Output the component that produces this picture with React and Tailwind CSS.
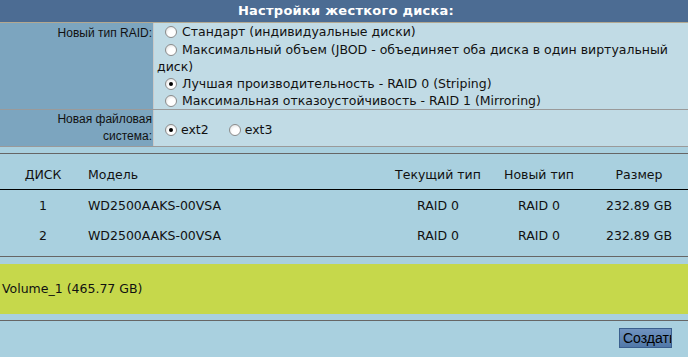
import React from "react";

// Windows XP style radio bullet
function Radio({ checked }) {
  return (
    <span className="inline-block align-[-2px] w-[12px] h-[12px] rounded-full border border-[#8c8c8c] bg-[radial-gradient(circle_at_60%_65%,#ffffff_40%,#d8d8d8_100%)] relative">
      {checked && (
        <span className="absolute left-[3px] top-[3px] w-[4px] h-[4px] rounded-full bg-black" />
      )}
    </span>
  );
}

const disks = [
  { id: 1, model: "WD2500AAKS-00VSA", cur: "RAID 0", next: "RAID 0", size: "232.89 GB" },
  { id: 2, model: "WD2500AAKS-00VSA", cur: "RAID 0", next: "RAID 0", size: "232.89 GB" },
];

export default function App() {
  const label = "font-['Liberation_Sans',Arial,sans-serif] text-[12px] text-[#111] text-right pr-[1px]";
  const value = "font-['DejaVu_Sans',Verdana,sans-serif] text-[12.5px] text-[#111]";

  return (
    <div className="w-[688px] h-[357px] overflow-hidden bg-[#a9d0df] font-['DejaVu_Sans',Verdana,sans-serif]">
      {/* header */}
      <div className="h-[23px] bg-[#4c6c93] border-b border-[#b3a890] flex items-center justify-center">
        <span className="text-white font-bold text-[13px] tracking-[0.25px] pl-[4px]">
          Настройки жесткого диска:
        </span>
      </div>

      {/* RAID type */}
      <div className="flex border-b border-[#9a9a9a]">
        <div className={`w-[153px] bg-[#7ca5bf] leading-[17px] pt-[2px] ${label}`}>Новый тип RAID:</div>
        <div className={`flex-1 bg-[#c1dbe5] border-l border-[#c9c9c9] pl-[3px] leading-[17px] ${value}`}>
          <div className="pl-[8px]"><Radio /> <span className="pl-[1px]">Стандарт (индивидуальные диски)</span></div>
          <div className="mt-[1px]">
            <span className="pl-[8px]"><Radio /></span> <span className="pl-[1px]">Максимальный объем (JBOD - объединяет оба диска в один виртуальный</span>
            <br />
            диск)
          </div>
          <div className="pl-[8px]"><Radio checked /> <span className="pl-[1px]">Лучшая производительность - RAID 0 (Striping)</span></div>
          <div className="pl-[8px]"><Radio /> <span className="pl-[1px]">Максимальная отказоустойчивость - RAID 1 (Mirroring)</span></div>
        </div>
      </div>

      {/* file system */}
      <div className="flex h-[37px] border-b border-[#9a9a9a]">
        <div className={`w-[153px] bg-[#7ca5bf] leading-[17px] pt-[1px] ${label}`}>
          Новая файловая
          <br />
          система:
        </div>
        <div className={`flex-1 bg-[#c1dbe5] border-l border-[#c9c9c9] pl-[11px] flex items-center pt-[4px] ${value}`}>
          <Radio checked />
          <span className="ml-[4px]">ext2</span>
          <span className="ml-[20px]"><Radio /></span>
          <span className="ml-[4px]">ext3</span>
        </div>
      </div>

      {/* disks table */}
      <div className="mt-[6px] border-t border-[#666] text-[12.5px] text-[#111]">
        <div className="grid grid-cols-[86px_302px_100px_102px_98px] h-[36px] items-end pb-[4px] border-b border-black">
          <div className="text-center">ДИСК</div>
          <div className="pl-[2px]">Модель</div>
          <div className="text-center">Текущий тип</div>
          <div className="text-center">Новый тип</div>
          <div className="text-center">Размер</div>
        </div>
        <div className="pt-[1px] pb-[5px] border-b border-[#666]">
          {disks.map((d) => (
            <div key={d.id} className="grid grid-cols-[86px_302px_100px_102px_98px] h-[30px] items-center">
              <div className="text-center">{d.id}</div>
              <div className="pl-[2px]">{d.model}</div>
              <div className="text-center">{d.cur}</div>
              <div className="text-center">{d.next}</div>
              <div className="text-center">{d.size}</div>
            </div>
          ))}
        </div>
      </div>

      {/* volume */}
      <div className="mt-[7px] h-[50px] bg-[#c6d84b] flex items-center pl-[2px] text-[12.5px] text-[#111]">
        Volume_1 (465.77 GB)
      </div>

      <div className="mt-[6px] border-t border-[#666] flex justify-end pr-[16px] pt-[7px]">
        <button className="w-[53px] h-[20px] overflow-hidden whitespace-nowrap text-left pl-[3px] border border-[#3a5f8e] bg-[linear-gradient(#7093c0,#5078a8)] text-[14px] leading-[18px] text-black font-['Liberation_Sans',Arial,sans-serif]">
          Создать
        </button>
      </div>
    </div>
  );
}
